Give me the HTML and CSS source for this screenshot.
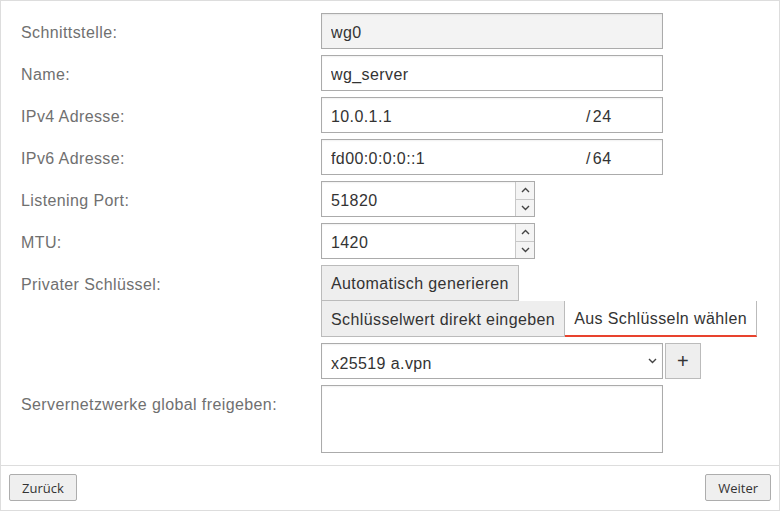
FILE: index.html
```html
<!DOCTYPE html>
<html lang="de">
<head>
    <meta charset="UTF-8">
    <title>WireGuard - Schnittstelle</title>
    <link rel="stylesheet" href="styles.css">
</head>
<body>
    <div class="panel">
        <div class="form">
            <div class="row">
                <label for="iface">Schnittstelle:</label>
                <input type="text" id="iface" class="input" value="wg0" readonly>
            </div>
            <div class="row">
                <label for="name">Name:</label>
                <input type="text" id="name" class="input" value="wg_server">
            </div>
            <div class="row">
                <label for="ipv4">IPv4 Adresse:</label>
                <div class="input cidr">
                    <input type="text" id="ipv4" class="cidr-addr" value="10.0.1.1">
                    <span class="cidr-sep">/</span>
                    <input type="text" class="cidr-prefix" value="24">
                </div>
            </div>
            <div class="row">
                <label for="ipv6">IPv6 Adresse:</label>
                <div class="input cidr">
                    <input type="text" id="ipv6" class="cidr-addr" value="fd00:0:0:0::1">
                    <span class="cidr-sep">/</span>
                    <input type="text" class="cidr-prefix" value="64">
                </div>
            </div>
            <div class="row">
                <label for="port">Listening Port:</label>
                <div class="input spin">
                    <input type="number" id="port" class="spin-value" value="51820">
                    <div class="spin-btns">
                        <span class="spin-btn"><svg width="9" height="6" viewBox="0 0 9 6"><path d="M1 5 L4.5 1.5 L8 5" /></svg></span>
                        <span class="spin-btn"><svg width="9" height="6" viewBox="0 0 9 6"><path d="M1 1 L4.5 4.5 L8 1" /></svg></span>
                    </div>
                </div>
            </div>
            <div class="row">
                <label for="mtu">MTU:</label>
                <div class="input spin">
                    <input type="number" id="mtu" class="spin-value" value="1420">
                    <div class="spin-btns">
                        <span class="spin-btn"><svg width="9" height="6" viewBox="0 0 9 6"><path d="M1 5 L4.5 1.5 L8 5" /></svg></span>
                        <span class="spin-btn"><svg width="9" height="6" viewBox="0 0 9 6"><path d="M1 1 L4.5 4.5 L8 1" /></svg></span>
                    </div>
                </div>
            </div>
            <div class="row">
                <label>Privater Schlüssel:</label>
                <div class="key-group">
                    <div><button type="button" class="btn">Automatisch generieren</button></div>
                    <div class="tabs">
                        <button type="button" class="btn tab">Schlüsselwert direkt eingeben</button>
                        <button type="button" class="btn tab active">Aus Schlüsseln wählen</button>
                    </div>
                    <div class="select-row">
                        <div class="select-wrap">
                            <select class="input select">
                                <option>x25519 a.vpn</option>
                            </select>
                            <svg class="select-arrow" width="9" height="6" viewBox="0 0 9 6"><path d="M1 1 L4.5 4.5 L8 1" /></svg>
                        </div>
                        <button type="button" class="btn plus-btn">+</button>
                    </div>
                </div>
            </div>
            <div class="row">
                <label for="networks">Servernetzwerke global freigeben:</label>
                <textarea id="networks" class="input textarea"></textarea>
            </div>
        </div>
        <div class="footer">
            <button type="button" class="footer-btn">Zurück</button>
            <button type="button" class="footer-btn">Weiter</button>
        </div>
    </div>
</body>
</html>
```

FILE: styles.css
```css
html, body { margin: 0; padding: 0; background: #fff; }
body { font-family: "Liberation Sans", Arial, sans-serif; font-size: 16px; color: #333; }

.panel { border: 1px solid #ddd; height: 511px; box-sizing: border-box; display: flex; flex-direction: column; }
.form { flex: 1; padding: 12px 20px 11px; display: flex; flex-direction: column; gap: 6px; }
.row { display: flex; align-items: flex-start; }
.row label { width: 300px; flex: none; line-height: 32px; padding-top: 4px; color: #707070; letter-spacing: 0.4px; }

.input {
    width: 342px;
    height: 36px;
    box-sizing: border-box;
    border: 1px solid #ababab;
    padding: 4px 9px 0;
    font: inherit;
    letter-spacing: 0.4px;
    color: #333;
    background: #fff;
    box-shadow: inset 0 1px 2px rgba(0, 0, 0, 0.06);
    outline: none;
}
.input[readonly] { background: #f3f3f3; }

.cidr { display: flex; align-items: center; }
.cidr input { border: none; background: transparent; font: inherit; letter-spacing: inherit; color: inherit; padding: 0; outline: none; }
.cidr-addr { width: 255px; }
.cidr-sep { margin-right: 2px; }
.cidr-prefix { width: 50px; }

.spin { width: 214px; display: flex; padding: 0 0 0 9px; }
.spin-value { flex: 1; min-width: 0; border: none; background: transparent; font: inherit; letter-spacing: inherit; color: inherit; padding: 4px 0 0; outline: none; -moz-appearance: textfield; }
.spin-value::-webkit-inner-spin-button, .spin-value::-webkit-outer-spin-button { -webkit-appearance: none; margin: 0; }
.spin-btns { width: 18px; display: flex; flex-direction: column; border-left: 1px solid #c8c8c8; }
.spin-btn { flex: 1; display: flex; align-items: center; justify-content: center; background: #f4f4f4; }
.spin-btn + .spin-btn { border-top: 1px solid #c8c8c8; }
.spin-btn svg path, .select-arrow path { fill: none; stroke: #444; stroke-width: 1.4; }

.btn {
    height: 36px;
    box-sizing: border-box;
    border: 1px solid #bbb;
    background: #eee;
    color: #333;
    font: inherit;
    letter-spacing: 0.4px;
    padding: 2px 9px 0;
    cursor: pointer;
}
.key-group { display: flex; flex-direction: column; }
.tabs { display: flex; }
.tabs .tab { border-top: none; }
.tab.active { background: #fff; border-left: none; border-bottom: 2px solid #e8432e; }

.select-row { display: flex; gap: 2px; margin-top: 6px; }
.select-wrap { position: relative; }
.select { -webkit-appearance: none; appearance: none; display: block; }
.select-arrow { position: absolute; right: 6px; top: 15px; }
.plus-btn { width: 36px; padding: 0; font-size: 20px; line-height: 1; }

.textarea { height: 68px; resize: none; display: block; padding: 6px 9px; }

.footer { border-top: 1px solid #ddd; padding: 8px 8px 9px; display: flex; justify-content: space-between; }
.footer-btn {
    height: 27px;
    padding: 0 12px;
    border: 1px solid #adadad;
    border-radius: 2px;
    background: #efefef;
    color: #333;
    font-family: "Open Sans", "Noto Sans", sans-serif;
    font-size: 13px;
    cursor: pointer;
}
```
